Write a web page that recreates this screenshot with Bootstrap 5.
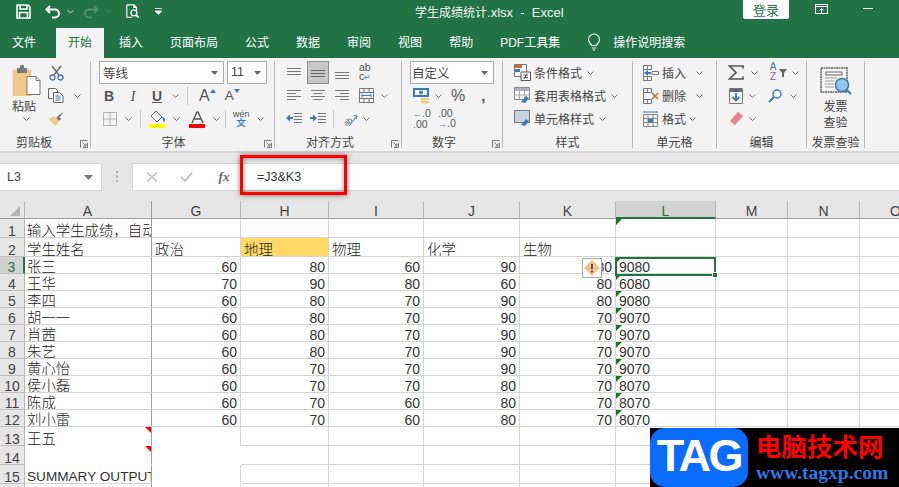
<!DOCTYPE html>
<html lang="zh-CN">
<head>
<meta charset="utf-8">
<title>学生成绩统计.xlsx - Excel</title>
<link rel="stylesheet" href="https://cdn.jsdelivr.net/npm/bootstrap@5.3.0/dist/css/bootstrap.min.css">
<style>
html,body{margin:0;height:487px;overflow:hidden;background:#fff}
body{font-family:"Noto Sans CJK SC","Liberation Sans",sans-serif;font-size:12px;color:#444;width:899px}
svg{display:block;flex:none}
.titlebar{height:28px;background:#217346;color:#fff}
.tbtn{margin-top:4px;height:15px}
.doc-title{left:415px;top:3px;line-height:17px;font-size:12px;white-space:nowrap;color:#f2f7f4}
.doc-title b{font-family:"Liberation Sans",sans-serif;font-weight:400;font-size:13px}
.login{left:743px;top:0;width:46px;height:19px;background:#fff;color:#217346;font-size:13px;line-height:19px;text-align:center;border-radius:0 0 2px 2px}
.winicon1{left:815px;top:4px}
.winicon2{left:863px;top:0}
.tabsbar{height:30px;background:#217346;color:#fff;line-height:28px;padding-left:12px;gap:3px}
.tabitem{padding:0 12px;height:30px;white-space:nowrap;font-size:12px}
.tabitem.first{padding-left:0;margin-right:5px}
.tabitem.on{background:#f3f3f3;color:#217346}
.tabitem i{font-style:normal;font-family:"Liberation Sans",sans-serif;font-size:12px}
.tbulb{margin-top:5px;margin-left:12px}
.tsearch{padding-left:9px}
.ribbon{height:95px;background:#f3f3f3;border-bottom:2px solid #d6d6d6;padding-top:3px}
.rg{height:87px;border-right:1px solid #b8b8b8;flex:none;position:relative}
.w91{width:91px}.w184{width:184px}.w127{width:127px}.w101{width:101px}.w130{width:130px}.w84{width:84px}.w90{width:90px}.w58{width:58px}
.rr{height:23px;display:flex;align-items:center;white-space:nowrap}
.lbl{position:absolute;left:0;right:0;top:71px;text-align:center;line-height:20px;font-size:12px;color:#444}
.lbl.l22{right:22px}.lbl.l18{right:18px}.lbl.l16{right:16px}
.launch{position:absolute;right:2px;top:79px}
.combo{height:23px;background:#fff;border:1px solid #ababab;line-height:21px;padding-left:3px;font-size:12.5px;color:#444}
.cf{width:125px}.cs{width:40px}.cn{width:84px;padding-left:1px}
.cn,.cf,.cs{display:flex;align-items:center;justify-content:space-between;padding-right:5px}
.lat{font-family:"Liberation Sans",sans-serif}
.bb{width:16px;text-align:center;font:700 14px/16px "Liberation Sans",sans-serif;color:#555}
.ii{font:italic 400 15px/16px "Liberation Serif",serif}
.uu{font-weight:700;text-decoration:underline}
.aa{font:400 16px/18px "Liberation Sans",sans-serif;color:#555;position:relative}
.small-a{font-size:13.5px}
.triu{margin-top:-10px}
.sepv{width:1px;height:18px;background:#c6c6c6;flex:none}
.selbtn{width:22px;height:23px;background:#c6c6c6;border:1px solid #8f8f8f;display:flex;align-items:center;justify-content:center}
.pct{font:400 16px/18px "Liberation Sans",sans-serif;color:#555}
.cma{font:700 15px/14px "Liberation Sans",sans-serif;color:#555}
.wen{width:16px;text-align:center;font:400 9px/8px "Liberation Sans",sans-serif;color:#555}
.wen span,.wen em{display:block;font-style:normal}
.wen em{font:700 9.5px/9px "Noto Sans CJK SC",sans-serif;color:#3e78b5}
.abc{font:400 10.5px/9px "Liberation Sans",sans-serif;color:#555;width:14px}
.abc u{color:#3e78b5;text-decoration:none;font-size:8px}
.dec{font:400 10.5px/10px "Liberation Sans",sans-serif;color:#555;width:16px;white-space:nowrap}
.dec b{color:#3e78b5;font-size:9px;font-weight:700}
.az{width:12px;text-align:center;font:400 10px/10px "Liberation Sans",sans-serif;margin-top:-1px}
.az b{display:block;font-weight:400;color:#3e78b5}
.az em{display:block;font-style:normal;color:#8a5aa8}
.m1{margin-left:1px}.m2{margin-left:2px}.m3{margin-left:3px}.m4{margin-left:4px}.m5{margin-left:5px}.m6{margin-left:6px}.m7{margin-left:7px}.m8{margin-left:8px}.m9{margin-left:9px}.m10{margin-left:10px}.m11{margin-left:11px}.m12{margin-left:12px}.m13{margin-left:13px}.m14{margin-left:14px}.m16{margin-left:16px}.m23{margin-left:23px}
.pastecol{width:48px;padding-left:12px;padding-top:4px;text-align:left}
.pastecol span{display:block;line-height:16px;margin-top:2px;font-size:12px;width:24px;text-align:center}
.pastecol svg.cr{margin:3px 0 0 11px}
.invcol{padding-top:6px;text-align:center;line-height:16px}
.invcol svg{margin:0 auto 3px}
.fbar{height:48px;background:#e6e6e6;padding-top:10px}
.namebox{width:102px;height:28px;background:#fff;border:1px solid #d6d6d6;border-left:0;padding:0 8px 0 7px;font:400 12.5px/26px "Liberation Sans",sans-serif;color:#444}
.grip{width:30px;height:28px;padding-top:8px}
.fbox{height:28px;background:#fff;border:1px solid #d6d6d6;border-right:0;width:767px}
.ftext{font:400 12.5px/26px "Liberation Sans",sans-serif;color:#333;margin-left:25px}
.fx{font:italic 700 13px/26px "Liberation Serif",serif;color:#666;width:16px;text-align:center;margin-left:23px}
.redbox{left:240px;top:155px;width:107px;height:40px;border:3px solid #f00;box-shadow:0 0 5px rgba(0,0,0,.55),inset 0 0 5px rgba(0,0,0,.45)}
.sheetwrap{height:286px;overflow:hidden;background:#fff}
table.xls{table-layout:fixed;width:932px;border-collapse:separate;border-spacing:0;font:400 14px/12px "Liberation Sans",sans-serif;color:#333}
.c25{width:25px}.c127{width:127px}.c89{width:89px}.c88{width:88px}.c95{width:95px}.c96{width:96px}.c100{width:100px}.c72{width:72px}
.xls td,.xls th{padding:0 3px;border-right:1px solid #d4d4d4;border-bottom:1px solid #d4d4d4;overflow:hidden;white-space:nowrap;vertical-align:bottom;position:relative;font-weight:400}
.xls thead th{height:18px;background:#e6e6e6;text-align:center;color:#444;border-right-color:#b6b6b6;border-bottom-color:#a0a0a0;vertical-align:middle;padding-top:3px}
.xls tbody th{background:#e6e6e6;text-align:center;color:#444;border-right-color:#b6b6b6;border-bottom-color:#c0c0c0;padding:0}
.xls th.corner{padding:0}
.corner svg{position:absolute;right:4px;bottom:2px}
.xls th.selc{background:#d2d2d2;color:#217346;border-bottom:2px solid #217346}
.xls th.selr{background:#d2d2d2;color:#217346;border-right:2px solid #217346}
.xls .colA{border-right:1px solid #9c9c9c;padding-left:2px}
.xls td.num{text-align:right}
.xls td.zh{font-family:"Noto Sans CJK SC",sans-serif;font-weight:300;font-size:14.4px;line-height:14px;color:#222}
.xls td.sumtxt{font-size:13.6px}
.h18{height:19px}.h17{height:17px}
.xls td.gold{background:#ffd966}
.xls td.nob{border-bottom-color:#fff}
.xls td.nor{border-right-color:#fff}
.gtri::before{content:"";position:absolute;left:0;top:0;border-top:6px solid #107c10;border-right:6px solid transparent}
.rtri::after{content:"";position:absolute;right:0;top:0;border-top:6px solid #f00;border-left:6px solid transparent}
.l3box{position:absolute;left:615px;top:257px;width:101px;height:19px;border:2px solid #217346}
.l3handle{position:absolute;right:-4px;bottom:-4px;width:6px;height:6px;background:#217346;border:1px solid #fff}
.warn{position:absolute;left:582px;top:258px;width:20px;height:20px;background:#fff;border:1px solid #a9a9a9}
.tagmark{left:650px;top:428px;width:249px;height:59px;background:#000}
.tagbox{width:98px;height:59px;background:#0a6cff;border-radius:15px;color:#fff;font:700 45px/56px "Liberation Sans",sans-serif;letter-spacing:-2.4px;text-align:center}
.tagcopy{padding-left:8px}
.tagcn{color:#f00;font:700 25.5px/28px "Noto Sans CJK SC",sans-serif;margin-top:3px;white-space:nowrap}
.tagen{color:#2e77e6;font:700 19.5px/20px "Liberation Serif",serif;margin-top:4px;white-space:nowrap}
</style>
</head>
<body class="position-relative">
<svg width="0" height="0" class="position-absolute">
<defs>
<symbol id="cr" viewBox="0 0 7 4"><path d="M.5.5l3 3 3-3" fill="none" stroke="#666" stroke-width="1"/></symbol>
<symbol id="lc" viewBox="0 0 8 8"><path d="M.5 7.5v-7h7M7.5 3v4.5H3M2.5 2.5l3.5 3.5M6 3.5V6H3.5" fill="none" stroke="#777" stroke-width="1"/></symbol>
</defs>
</svg>

<header class="titlebar d-flex position-relative">
  <svg class="tbtn m16" width="15" height="16" viewBox="0 0 15 15"><path d="M1 1h11l2 2v11H1zM4 1v4h7V1M3.5 14V8.5h8V14" fill="none" stroke="#fff" stroke-width="1.6"/></svg>
  <svg class="tbtn m14" width="16" height="15" viewBox="0 0 16 15"><path d="M5 2L1.5 5.5 5 9M2 5.5h8a4 4 0 0 1 0 8H7" fill="none" stroke="#fff" stroke-width="2"/></svg>
  <svg class="tbtn m6" width="7" height="15" viewBox="0 0 7 15"><path d="M.5 6l3 3 3-3" fill="none" stroke="#cfe3d8"/></svg>
  <svg class="tbtn m9" width="16" height="15" viewBox="0 0 16 15"><path d="M11 2l3.500 3.500L11 9M14 5.500H6a4 4 0 0 0 0 8h3" fill="none" stroke="#4f9270" stroke-width="2"/></svg>
  <svg class="tbtn m6" width="7" height="15" viewBox="0 0 7 15"><path d="M.5 6l3 3 3-3" fill="none" stroke="#4f9270"/></svg>
  <svg class="tbtn m13" width="16" height="17" viewBox="0 0 16 17"><path d="M1 1h8l3 3v4M1 1v14h6M9 1v3h3" fill="none" stroke="#fff" stroke-width="1.300"/><circle cx="9" cy="10" r="3.400" fill="none" stroke="#fff" stroke-width="1.500"/><path d="M11.500 12.500l3 3" stroke="#fff" stroke-width="2"/></svg>
  <svg class="tbtn m13" width="9" height="15" viewBox="0 0 9 15"><path d="M1 4.500h7M1 7h7L4.500 10.500z" fill="#fff" stroke="#fff" stroke-width=".8"/></svg>
  <div class="doc-title position-absolute">学生成绩统计<b>.xlsx&nbsp; -&nbsp; Excel</b></div>
  <div class="login position-absolute">登录</div>
  <svg class="position-absolute winicon1" width="14" height="12" viewBox="0 0 14 12"><rect x=".5" y=".5" width="12" height="9" fill="none" stroke="#fff"/><path d="M.5 2.500h12M6.500 9V4.500M4.500 6.500l2-2 2 2" fill="none" stroke="#fff"/></svg>
  <svg class="position-absolute winicon2" width="11" height="12" viewBox="0 0 11 12"><path d="M0 8.500h10" stroke="#fff"/></svg>
</header>

<nav class="tabsbar d-flex">
  <div class="tabitem first">文件</div>
  <div class="tabitem on">开始</div>
  <div class="tabitem">插入</div>
  <div class="tabitem">页面布局</div>
  <div class="tabitem">公式</div>
  <div class="tabitem">数据</div>
  <div class="tabitem">审阅</div>
  <div class="tabitem">视图</div>
  <div class="tabitem">帮助</div>
  <div class="tabitem"><i>PDF</i>工具集</div>
  <svg class="tbulb" width="14" height="18" viewBox="0 0 14 18"><path d="M4.500 12.500C3.500 10 1.500 9.500 1.500 6.500a5.500 5.500 0 0 1 11 0c0 3-2 3.500-3 6zM4.800 15h4.400M5.800 17h2.400" fill="none" stroke="#fff" stroke-width="1.100"/></svg>
  <div class="tabitem tsearch">操作说明搜索</div>
</nav>

<section class="ribbon d-flex">
  <!-- 剪贴板 -->
  <div class="rg w91">
    <div class="d-flex">
      <div class="pastecol">
        <svg width="29" height="31" viewBox="0 0 29 31"><path d="M1 5h18v26H1z" fill="#efc987" stroke="#e4bb75" stroke-width=".5"/><path d="M5 3h10v5H5z" fill="#777"/><rect x="8" y="0" width="4" height="4" rx="1" fill="#777"/><path d="M15 11.500h9l4 4v14H15z" fill="#fff" stroke="#777"/><path d="M24 11.500v4h4" fill="none" stroke="#777"/></svg>
        <span>粘贴</span>
        <svg class="cr" width="7" height="4"><use href="#cr"/></svg>
      </div>
      <div>
        <div class="rr"><svg class="m1" width="15" height="16" viewBox="0 0 15 16"><path d="M3 1l7 9M12 1L5 10" stroke="#666" stroke-width="1.300"/><circle cx="3.500" cy="12.500" r="2.500" fill="none" stroke="#3e78b5" stroke-width="1.300"/><circle cx="11.500" cy="12.500" r="2.500" fill="none" stroke="#3e78b5" stroke-width="1.300"/></svg></div>
        <div class="rr"><svg width="16" height="15" viewBox="0 0 16 15"><path d="M.5.500h7l2 2v3M.5.500v10h4" fill="#fff" stroke="#666"/><path d="M5.500 4.500h6l3.500 3.500v6.500H5.500z" fill="#fff" stroke="#666"/><path d="M7.500 8h5M7.500 10h5M7.500 12h5" stroke="#3e78b5"/></svg><svg class="m10" width="7" height="4"><use href="#cr"/></svg></div>
        <div class="rr"><svg width="16" height="15" viewBox="0 0 16 15"><path d="M9 6l3 3" stroke="#777" stroke-width="3"/><path d="M15.500 1L10 5l1.500 1.500z" fill="#666"/><path d="M1 8l5-3 5 5-3 5C6 14 2 10 1 8z" fill="#efc987"/></svg></div>
      </div>
    </div>
    <div class="lbl l22">剪贴板</div>
    <svg class="launch" width="8" height="8"><use href="#lc"/></svg>
  </div>
  <!-- 字体 -->
  <div class="rg w184">
    <div class="rr"><div class="combo cf m8"><span>等线</span><svg width="7" height="4" viewBox="0 0 7 4"><path d="M0 0h7L3.500 4z" fill="#666"/></svg></div><div class="combo cs m3 lat"><span>11</span><svg width="7" height="4" viewBox="0 0 7 4"><path d="M0 0h7L3.500 4z" fill="#666"/></svg></div></div>
    <div class="rr">
      <span class="bb m10">B</span><span class="bb ii m8">I</span><span class="bb uu m8">U</span>
      <svg class="m7" width="7" height="4"><use href="#cr"/></svg><i class="sepv m8"></i>
      <span class="aa m11">A</span><svg class="triu" width="6" height="4" viewBox="0 0 6 4"><path d="M3 0l3 4H0z" fill="#3e78b5"/></svg>
      <span class="aa m9 small-a">A</span><svg class="triu" width="6" height="4" viewBox="0 0 6 4"><path d="M0 0h6L3 4z" fill="#3e78b5"/></svg>
    </div>
    <div class="rr">
      <svg class="m12" width="14" height="14" viewBox="0 0 14 14"><path d="M.5.500h13v13H.5zM7 .5v13M.5 7h13" fill="none" stroke="#777" stroke-dasharray="1 1"/></svg>
      <svg class="m8" width="7" height="4"><use href="#cr"/></svg><i class="sepv m8"></i>
      <div class="m8"><svg width="17" height="18" viewBox="0 0 17 18"><path d="M7 1l6 6-5 5-6-6z" fill="#fff" stroke="#666"/><path d="M13 7c1.500 0 3 1 3 3 0 1-.5 2-1 2s-1-1-1-2z" fill="#3e78b5"/><rect y="14" width="16" height="4" fill="#ff0"/></svg></div>
      <svg class="m7" width="7" height="4"><use href="#cr"/></svg>
      <div class="m9"><svg width="17" height="18" viewBox="0 0 17 18"><path d="M3 13L8 2h1l5 11M5 9h7" fill="none" stroke="#555" stroke-width="1.400"/><rect y="14" width="16" height="4" fill="#f00"/></svg></div>
      <svg class="m7" width="7" height="4"><use href="#cr"/></svg><i class="sepv m5"></i>
      <div class="wen m7"><span>wén</span><em>文</em></div>
      <svg class="m8" width="7" height="4"><use href="#cr"/></svg>
    </div>
    <div class="lbl l18">字体</div>
    <svg class="launch" width="8" height="8"><use href="#lc"/></svg>
  </div>
  <!-- 对齐方式 -->
  <div class="rg w127">
    <div class="rr">
      <svg class="m12" width="14" height="14" viewBox="0 0 14 14"><path d="M0 2.500h14M0 5.500h14M0 8.500h14" stroke="#777"/></svg>
      <div class="selbtn m6"><svg width="14" height="14" viewBox="0 0 14 14"><path d="M0 4.500h14M0 7.500h14M0 10.500h14" stroke="#666"/></svg></div>
      <svg class="m6" width="14" height="14" viewBox="0 0 14 14"><path d="M0 6.500h14M0 9.500h14M0 12.500h14" stroke="#777"/></svg>
      <div class="abc m10">ab<br>c<u>↵</u></div>
    </div>
    <div class="rr">
      <svg class="m12" width="14" height="13" viewBox="0 0 14 13"><path d="M0 1.500h14M0 4.500h9M0 7.500h14M0 10.500h9" stroke="#777"/></svg>
      <svg class="m10" width="14" height="13" viewBox="0 0 14 13"><path d="M0 1.500h14M2.500 4.500h9M0 7.500h14M2.500 10.500h9" stroke="#777"/></svg>
      <svg class="m10" width="14" height="13" viewBox="0 0 14 13"><path d="M0 1.500h14M5 4.500h9M0 7.500h14M5 10.500h9" stroke="#777"/></svg>
      <svg class="m10" width="15" height="15" viewBox="0 0 15 15"><path d="M.5.500h14v14H.5zM.5 4.500h14M.5 10.500h14M5 .5v4M10 .5v4M5 10.500v4M10 10.500v4" fill="none" stroke="#777"/><path d="M3 7.500h9" stroke="#3e78b5"/><path d="M3 5.500v4M12 5.500v4" stroke="#3e78b5"/></svg>
      <svg class="m7" width="7" height="4"><use href="#cr"/></svg>
    </div>
    <div class="rr">
      <svg class="m11" width="16" height="13" viewBox="0 0 16 13"><path d="M8 1.500h8M8 4.500h8M8 7.500h8M8 10.500h8" stroke="#777"/><path d="M0 6l4-3.500v2.500h3v2H4v2.500z" fill="#3e78b5"/></svg>
      <svg class="m8" width="16" height="13" viewBox="0 0 16 13"><path d="M8 1.500h8M8 4.500h8M8 7.500h8M8 10.500h8" stroke="#777"/><path d="M7 6L3 2.500v2.500H0v2h3v2.500z" fill="#3e78b5"/></svg>
      <i class="sepv m7"></i>
      <svg class="m7" width="18" height="16" viewBox="0 0 18 16"><text x="1" y="12" transform="rotate(-40 8 8)" font-family="Liberation Sans" font-size="8" fill="#666">ab</text><path d="M8 15l8-10M13 4.500l3 .5-.5 3" fill="none" stroke="#3e78b5"/></svg>
      <svg class="m4" width="7" height="4"><use href="#cr"/></svg>
    </div>
    <div class="lbl l16">对齐方式</div>
    <svg class="launch" width="8" height="8"><use href="#lc"/></svg>
  </div>
  <!-- 数字 -->
  <div class="rg w101">
    <div class="rr"><div class="combo cn m8"><span>自定义</span><svg width="7" height="4" viewBox="0 0 7 4"><path d="M0 0h7L3.500 4z" fill="#666"/></svg></div></div>
    <div class="rr">
      <svg class="m11" width="17" height="16" viewBox="0 0 17 16"><rect width="16" height="9" fill="#3e78b5"/><rect x="2" y="2" width="12" height="5" fill="#fff"/><circle cx="8" cy="4.500" r="2" fill="#3e78b5"/><ellipse cx="12" cy="11" rx="4.500" ry="1.500" fill="#efc987"/><ellipse cx="12" cy="14" rx="4.500" ry="1.500" fill="#efc987"/></svg>
      <svg class="m5" width="7" height="4"><use href="#cr"/></svg>
      <span class="pct m9">%</span><span class="cma m16">,</span>
    </div>
    <div class="rr">
      <div class="dec m11"><b>←</b>.0<br>.00</div><div class="dec m9">.00<br><b>→</b>.0</div>
    </div>
    <div class="lbl l16">数字</div>
    <svg class="launch" width="8" height="8"><use href="#lc"/></svg>
  </div>
  <!-- 样式 -->
  <div class="rg w130">
    <div class="rr">
      <svg class="m11" width="17" height="17" viewBox="0 0 17 17"><path d="M.5.500h12v12H.5z" fill="#fff" stroke="#777"/><path d="M1 1h7v3H1z" fill="#d9643a"/><path d="M1 5h5v3H1z" fill="#3e78b5"/><path d="M7 8h9.500v8.500H7z" fill="#fff" stroke="#555"/><path d="M9.500 11h4.500M9.500 13.500h4.500M13 9.500l-3 5.500" stroke="#555"/></svg>
      <span class="m3">条件格式</span><svg class="m5" width="7" height="4"><use href="#cr"/></svg>
    </div>
    <div class="rr">
      <svg class="m11" width="17" height="17" viewBox="0 0 17 17"><path d="M.5.500h15v12H.5z" fill="#fff" stroke="#888"/><path d="M1 1h14v3H1z" fill="#aab4c0"/><path d="M5.500.5v12M10.500.5v12M.5 8h15" stroke="#aaa"/><path d="M7 15l5-6 3 2-4 5z" fill="#3e78b5"/></svg>
      <span class="m3">套用表格格式</span><svg class="m5" width="7" height="4"><use href="#cr"/></svg>
    </div>
    <div class="rr">
      <svg class="m11" width="17" height="17" viewBox="0 0 17 17"><path d="M.5.500h15v12H.5z" fill="#c9d4e2" stroke="#777"/><path d="M7 15l5-6 3 2-4 5z" fill="#3e78b5"/></svg>
      <span class="m3">单元格样式</span><svg class="m5" width="7" height="4"><use href="#cr"/></svg>
    </div>
    <div class="lbl">样式</div>
  </div>
  <!-- 单元格 -->
  <div class="rg w84">
    <div class="rr">
      <svg class="m10" width="16" height="16" viewBox="0 0 16 16"><path d="M.5.500h8v4h-8zM.5 11.500h8v4h-8zM.5.500v15M4.500.5v4M4.500 11.500v4" fill="none" stroke="#777"/><path d="M1 8l4-3v2h3v2H5v2z" fill="#3e78b5"/><path d="M9 6.500h6.500v3H9z" fill="none" stroke="#777"/></svg>
      <span class="m3">插入</span><svg class="m10" width="7" height="4"><use href="#cr"/></svg>
    </div>
    <div class="rr">
      <svg class="m10" width="16" height="16" viewBox="0 0 16 16"><path d="M.5.500h8v4h-8zM.5 11.500h8v4h-8zM.5.500v15M4.500.5v4M4.500 11.500v4" fill="none" stroke="#777"/><path d="M9 5l6 6M15 5l-6 6" stroke="#d9643a" stroke-width="1.600"/></svg>
      <span class="m3">删除</span><svg class="m10" width="7" height="4"><use href="#cr"/></svg>
    </div>
    <div class="rr">
      <svg class="m10" width="16" height="16" viewBox="0 0 16 16"><path d="M.5 3.500h14v12H.5zM.5 7.500h14M.5 11.500h14M5 3.500v12M10 3.500v12" fill="none" stroke="#888"/><path d="M5 8h5v3.500H5z" fill="#3e78b5"/><path d="M1 1h13M1 0v2M14 0v2" stroke="#3e78b5"/></svg>
      <span class="m3">格式</span><svg class="m3" width="7" height="4"><use href="#cr"/></svg>
    </div>
    <div class="lbl">单元格</div>
  </div>
  <!-- 编辑 -->
  <div class="rg w90">
    <div class="rr">
      <svg class="m11" width="16" height="15" viewBox="0 0 16 15"><path d="M15 3.500V1H1.500L8 7.500 1.500 14H15v-2.500" fill="none" stroke="#555" stroke-width="1.700"/></svg>
      <svg class="m7" width="7" height="4"><use href="#cr"/></svg>
      <div class="az m9"><b>A</b><em>Z</em></div><svg width="8" height="8" viewBox="0 0 8 8"><path d="M0 0h8L5 4v4H3V4z" fill="#666"/></svg>
      <svg class="m5" width="7" height="4"><use href="#cr"/></svg>
    </div>
    <div class="rr">
      <svg class="m12" width="14" height="16" viewBox="0 0 14 16"><path d="M.5.500h13v15H.5z" fill="#fff" stroke="#777"/><path d="M1 1h12v3H1z" fill="#666"/><path d="M7 5v7M3.500 9L7 12.500 10.500 9" fill="none" stroke="#3e78b5" stroke-width="1.800"/></svg>
      <svg class="m6" width="7" height="4"><use href="#cr"/></svg>
      <svg class="m12" width="14" height="14" viewBox="0 0 14 14"><circle cx="9" cy="5" r="4" fill="#fff" stroke="#3e78b5" stroke-width="1.400"/><path d="M6 8l-5 5" stroke="#3e78b5" stroke-width="2"/></svg>
      <svg class="m8" width="7" height="4"><use href="#cr"/></svg>
    </div>
    <div class="rr">
      <svg class="m12" width="14" height="13" viewBox="0 0 14 13"><path d="M9 0l5 4-8 9-5-4z" fill="#e88094"/></svg>
      <svg class="m6" width="7" height="4"><use href="#cr"/></svg>
    </div>
    <div class="lbl">编辑</div>
  </div>
  <!-- 发票查验 -->
  <div class="rg w58 invcol">
    <svg width="32" height="28" viewBox="0 0 32 28"><path d="M1 1h26v24H1z" fill="#f6f6f6" stroke="#666" stroke-width="1.500" stroke-dasharray="2 .5"/><rect x="6" y="5" width="16" height="3" fill="none" stroke="#666"/><path d="M5 11h12M5 14h9M5 17h9M5 20h9" stroke="#999"/><circle cx="22" cy="18" r="6.500" fill="#92c6ef" stroke="#3e78b5" stroke-width="1.500"/><path d="M27 23l4 4" stroke="#3e78b5" stroke-width="2"/></svg>
    发票<br>查验
    <div class="lbl">发票查验</div>
  </div>
</section>

<section class="fbar d-flex">
  <div class="namebox d-flex justify-content-between align-items-center"><span>L3</span><svg width="9" height="5" viewBox="0 0 9 5"><path d="M0 0h9L4.500 5z" fill="#777"/></svg></div>
  <div class="grip d-flex justify-content-center"><svg width="2" height="11" viewBox="0 0 2 11"><path d="M0 0h2v2H0zM0 4.500h2v2H0zM0 9h2v2H0z" fill="#aaa"/></svg></div>
  <div class="fbox d-flex align-items-center">
    <svg class="m14" width="10" height="10" viewBox="0 0 10 10"><path d="M0 0l10 10M10 0L0 10" stroke="#c4c4c4" stroke-width="1.700"/></svg>
    <svg class="m23" width="13" height="10" viewBox="0 0 13 10"><path d="M1 5l4 4 7-8" fill="none" stroke="#c4c4c4" stroke-width="1.900"/></svg>
    <span class="fx">fx</span>
    <span class="ftext">=J3&amp;K3</span>
  </div>
</section>
<div class="redbox position-absolute"></div>

<main class="sheetwrap">
<table class="xls">
<colgroup><col class="c25"><col class="c127"><col class="c89"><col class="c88"><col class="c95"><col class="c96"><col class="c96"><col class="c100"><col class="c72"><col class="c72"><col class="c72"></colgroup>
<thead><tr><th class="corner"><svg width="10" height="10" viewBox="0 0 10 10"><path d="M10 0v10H0z" fill="#b4b4b4"/></svg></th><th class="colA">A</th><th>G</th><th>H</th><th>I</th><th>J</th><th>K</th><th class="selc">L</th><th>M</th><th>N</th><th>O</th></tr></thead>
<tbody>
<tr class="h18"><th>1</th><td class="zh colA">输入学生成绩，自动</td><td></td><td></td><td></td><td></td><td></td><td class="gtri"></td><td></td><td></td><td></td></tr>
<tr class="h18"><th>2</th><td class="zh colA">学生姓名</td><td class="zh">政治</td><td class="zh gold">地理</td><td class="zh">物理</td><td class="zh">化学</td><td class="zh">生物</td><td></td><td></td><td></td><td></td></tr>
<tr class="h17"><th class="selr">3</th><td class="zh colA">张三</td><td class="num">60</td><td class="num">80</td><td class="num">60</td><td class="num">90</td><td class="num">80</td><td class="gtri">9080</td><td></td><td></td><td></td></tr>
<tr class="h17"><th>4</th><td class="zh colA">王华</td><td class="num">70</td><td class="num">90</td><td class="num">80</td><td class="num">60</td><td class="num">80</td><td class="gtri">6080</td><td></td><td></td><td></td></tr>
<tr class="h17"><th>5</th><td class="zh colA">李四</td><td class="num">60</td><td class="num">80</td><td class="num">70</td><td class="num">90</td><td class="num">80</td><td class="gtri">9080</td><td></td><td></td><td></td></tr>
<tr class="h17"><th>6</th><td class="zh colA">胡一一</td><td class="num">60</td><td class="num">80</td><td class="num">70</td><td class="num">90</td><td class="num">70</td><td class="gtri">9070</td><td></td><td></td><td></td></tr>
<tr class="h17"><th>7</th><td class="zh colA">肖茜</td><td class="num">60</td><td class="num">80</td><td class="num">70</td><td class="num">90</td><td class="num">70</td><td class="gtri">9070</td><td></td><td></td><td></td></tr>
<tr class="h17"><th>8</th><td class="zh colA">朱艺</td><td class="num">60</td><td class="num">80</td><td class="num">70</td><td class="num">90</td><td class="num">70</td><td class="gtri">9070</td><td></td><td></td><td></td></tr>
<tr class="h17"><th>9</th><td class="zh colA">黄心怡</td><td class="num">60</td><td class="num">70</td><td class="num">70</td><td class="num">90</td><td class="num">70</td><td class="gtri">9070</td><td></td><td></td><td></td></tr>
<tr class="h17"><th>10</th><td class="zh colA">侯小磊</td><td class="num">60</td><td class="num">70</td><td class="num">70</td><td class="num">80</td><td class="num">70</td><td class="gtri">8070</td><td></td><td></td><td></td></tr>
<tr class="h17"><th>11</th><td class="zh colA">陈成</td><td class="num">60</td><td class="num">70</td><td class="num">60</td><td class="num">80</td><td class="num">70</td><td class="gtri">8070</td><td></td><td></td><td></td></tr>
<tr class="h17"><th>12</th><td class="zh colA">刘小雷</td><td class="num">60</td><td class="num">70</td><td class="num">60</td><td class="num">80</td><td class="num">70</td><td class="gtri">8070</td><td></td><td></td><td></td></tr>
<tr class="h18"><th>13</th><td class="zh colA nob rtri">王五</td><td class="nob"></td><td></td><td></td><td></td><td></td><td></td><td></td><td></td><td></td></tr>
<tr class="h18"><th>14</th><td class="colA nob rtri"></td><td class="nob nor"></td><td></td><td></td><td></td><td></td><td></td><td></td><td></td><td></td></tr>
<tr class="h18"><th>15</th><td class="colA sumtxt">SUMMARY OUTPUT</td><td class="nob"></td><td></td><td></td><td></td><td></td><td></td><td></td><td></td><td></td></tr>
<tr class="h18"><th></th><td class="colA"></td><td></td><td></td><td></td><td></td><td></td><td></td><td></td><td></td><td></td></tr>
</tbody>
</table>
</main>

<div class="warn d-flex align-items-center justify-content-center"><svg width="16" height="16" viewBox="0 0 16 16"><path d="M8 0l8 8-8 8-8-8z" fill="#eec48a"/><path d="M8 4v5" stroke="#555" stroke-width="2"/><path d="M7 10.500h2v2H7z" fill="#555"/></svg></div>
<div class="l3box"><div class="l3handle"></div></div>

<aside class="tagmark position-absolute d-flex">
  <div class="tagbox">TAG</div>
  <div class="tagcopy">
    <div class="tagcn">电脑技术网</div>
    <div class="tagen">www.tagxp.com</div>
  </div>
</aside>
</body>
</html>
